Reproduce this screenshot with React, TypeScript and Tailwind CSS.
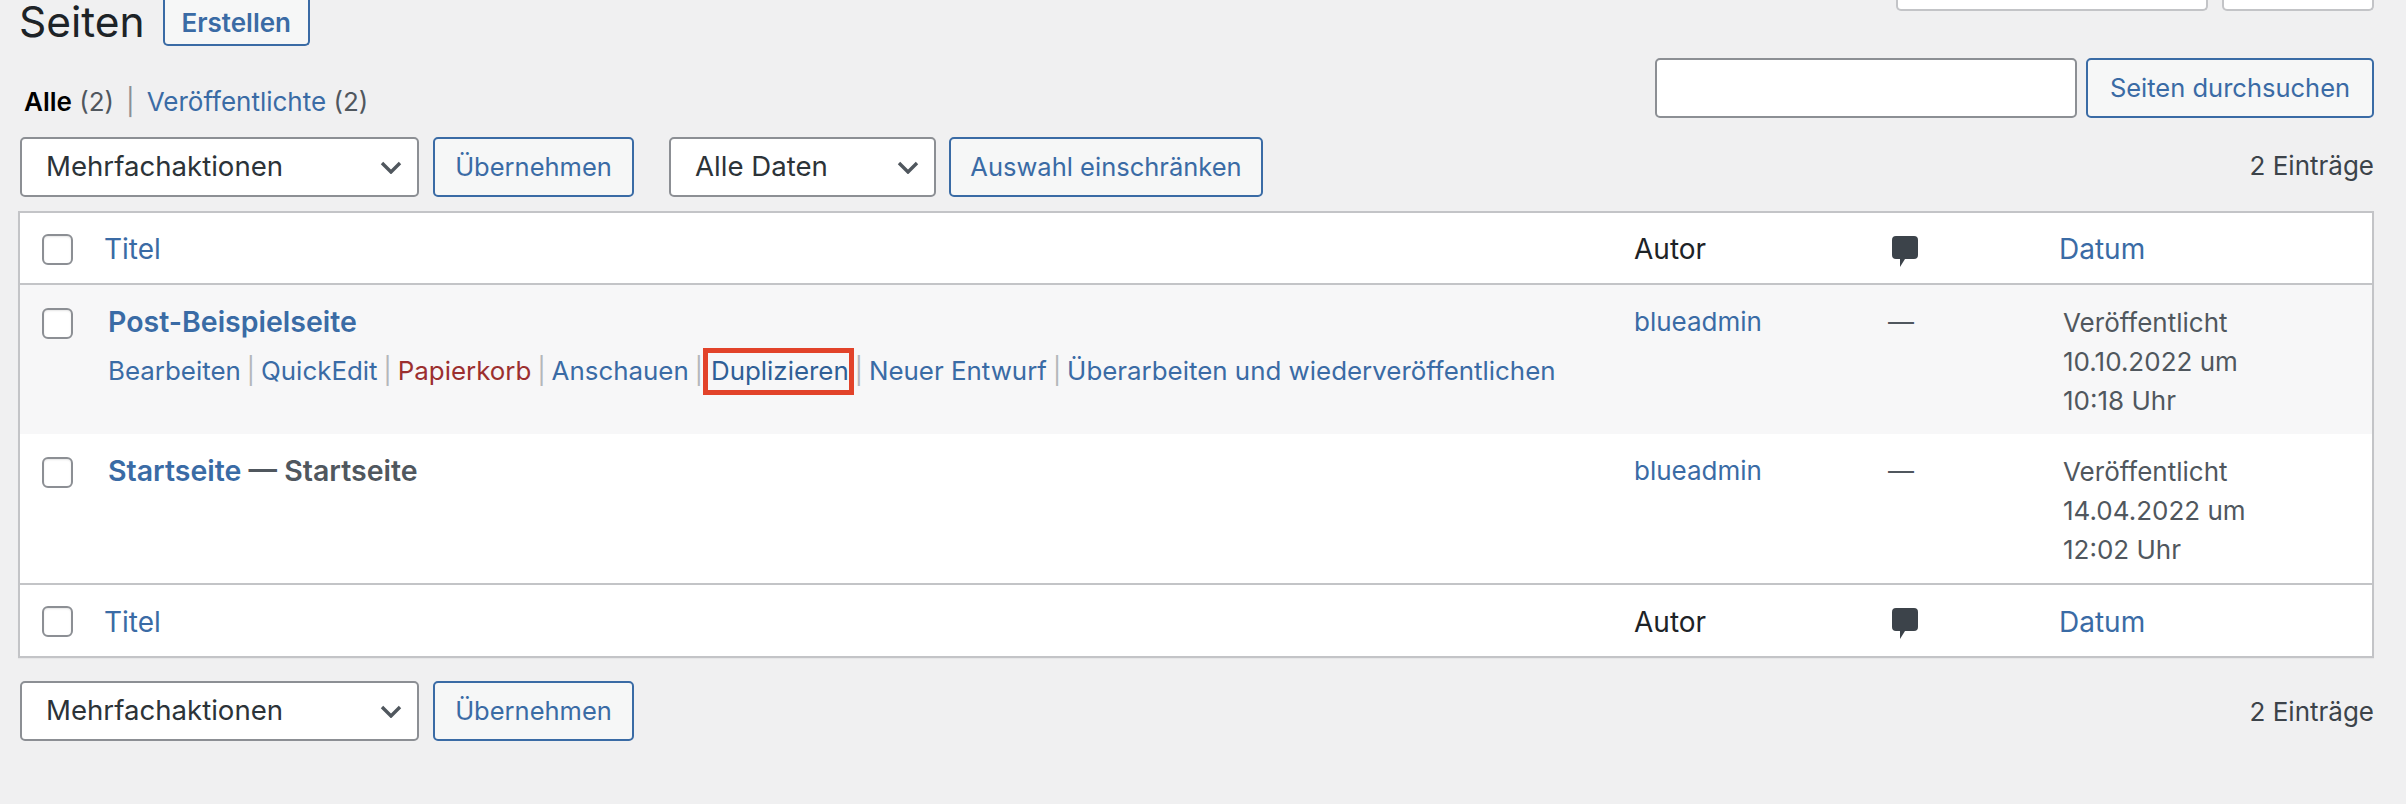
import React from 'react';

const FONT = "font-['Inter','Noto_Sans',sans-serif]";

const Chevron = () => (
  <svg width="22" height="13" viewBox="0 0 22 13" className="shrink-0">
    <path d="M2 2l9 9 9-9" fill="none" stroke="#50575e" strokeWidth="3.4" />
  </svg>
);

const CommentIcon = () => (
  <svg width="26" height="31" viewBox="0 0 26 31" className="mt-[4px] block">
    <path d="M4 0h18a4 4 0 0 1 4 4v15a4 4 0 0 1-4 4h-9l-5 8v-8H4a4 4 0 0 1-4-4V4a4 4 0 0 1 4-4z" fill="#3c434a" />
  </svg>
);

const Checkbox = () => (
  <div className="h-[31px] w-[31px] shrink-0 rounded-[6px] border-2 border-[#8c8f94] bg-white shadow-[inset_0_1px_2px_rgba(0,0,0,0.1)]" />
);

const Button: React.FC<{ label: string; className?: string }> = ({ label, className = '' }) => (
  <button className={`flex h-[60px] items-center justify-center rounded-[5px] border-2 border-[#3a6ba5] bg-[#f6f7f7] text-[25.5px] text-[#3a6ba5] ${className}`}>
    {label}
  </button>
);

const SelectBox: React.FC<{ label: string; className?: string }> = ({ label, className = '' }) => (
  <div className={`flex h-[60px] items-center justify-between rounded-[5px] border-2 border-[#8c8f94] bg-white pl-[24px] pr-[15px] text-[27.6px] text-[#2c3338] ${className}`}>
    <span>{label}</span>
    <Chevron />
  </div>
);

const Sep = () => <span className="mx-[5.8px] text-[#b4b7ba]">|</span>;

const HeaderRow: React.FC<{ className?: string }> = ({ className = '' }) => (
  <div className={`flex items-center pt-[2px] ${className}`}>
    <div className="w-[84px] pl-[22px]">
      <Checkbox />
    </div>
    <div className="w-[1530px] text-[#3a6ba5]">Titel</div>
    <div className="w-[258px] text-[#1d2327]">Autor</div>
    <div className="w-[167px]">
      <CommentIcon />
    </div>
    <div className="text-[#3a6ba5]">Datum</div>
  </div>
);

const PageRow: React.FC<{
  title: string;
  state?: string;
  date: string;
  time: string;
  hover?: boolean;
}> = ({ title, state, date, time, hover }) => (
  <div className={`flex h-[149px] pt-[23px] ${hover ? 'bg-[#f7f7f8]' : 'bg-white'}`}>
    <div className="w-[84px] pl-[22px]">
      <Checkbox />
    </div>
    <div className="w-[1530px] pl-[4px]">
      <div className="h-[28px] text-[28.5px] font-semibold leading-[28px] text-[#3a6ba5]">
        {title}
        {state && <span className="text-[#50575e]"> — {state}</span>}
      </div>
      {hover && (
        <div className="mt-[21px] flex h-[28px] items-center whitespace-nowrap text-[25.9px] text-[#3a6ba5]">
          <span>Bearbeiten</span>
          <Sep />
          <span>QuickEdit</span>
          <Sep />
          <span className="text-[#9c2f2f]">Papierkorb</span>
          <Sep />
          <span>Anschauen</span>
          <Sep />
          <span className="-ml-[6px] -mr-[5px] flex h-[47px] items-center border-[5px] border-[#e2432a] pl-[3px] text-[#2f5f96]">Duplizieren</span>
          <Sep />
          <span>Neuer Entwurf</span>
          <Sep />
          <span>Überarbeiten und wiederveröffentlichen</span>
        </div>
      )}
    </div>
    <div className="h-[28px] w-[254px] text-[26px] leading-[28px] text-[#3a6ba5]">blueadmin</div>
    <div className="h-[28px] w-[175px] text-[26px] leading-[28px] text-[#50575e]">—</div>
    <div className="-mt-[5px] text-[26px] leading-[39px] text-[#50575e]">
      <div>Veröffentlicht</div>
      <div>{date} um</div>
      <div>{time} Uhr</div>
    </div>
  </div>
);

export default function App() {
  return (
    <div className={`h-[804px] overflow-hidden bg-[#f0f0f1] pl-[18px] pr-[32px] ${FONT}`}>
      <div className="flex items-start justify-between">
        <div className="flex items-start pl-px">
          <h1 className="text-[42.5px] font-normal leading-[44px] text-[#1d2327]">Seiten</h1>
          <div className="ml-[18px] flex h-[46px] w-[147px] items-center justify-center rounded-b-[5px] border-2 border-t-0 border-[#3a6ba5] bg-[#f6f7f7] text-[26px] font-semibold text-[#3a6ba5]">
            Erstellen
          </div>
        </div>
        <div className="flex gap-[14px]">
          <div className="h-[11px] w-[312px] rounded-b-[5px] border-2 border-t-0 border-[#c3c4c7] bg-white" />
          <div className="h-[11px] w-[152px] rounded-b-[5px] border-2 border-t-0 border-[#c3c4c7] bg-white" />
        </div>
      </div>

      <div className="mt-[12px] flex items-end justify-between">
        <div className="pl-[6px] text-[26px] leading-[32px] text-[#50575e]">
          <span className="font-semibold text-black">Alle</span> (2)
          <span className="mx-[12px] text-[#8c8f94]">|</span>
          <span className="text-[#3a6ba5]">Veröffentlichte</span> (2)
        </div>
        <div className="flex gap-[9px]">
          <div className="h-[60px] w-[422px] rounded-[5px] border-2 border-[#8c8f94] bg-white" />
          <Button label="Seiten durchsuchen" className="w-[288px]" />
        </div>
      </div>

      <div className="mt-[19px] flex items-center">
        <SelectBox label="Mehrfachaktionen" className="ml-[2px] w-[399px]" />
        <Button label="Übernehmen" className="ml-[14px] w-[201px]" />
        <SelectBox label="Alle Daten" className="ml-[35px] w-[267px]" />
        <Button label="Auswahl einschränken" className="ml-[13px] w-[314px]" />
        <div className="mb-[3px] ml-auto text-[26px] text-[#3c434a]">2 Einträge</div>
      </div>

      <div className="mt-[14px] border-2 border-[#c3c4c7] bg-white text-[28px] shadow-[0_1px_1px_rgba(0,0,0,0.04)]">
        <HeaderRow className="h-[72px] border-b-2 border-[#c3c4c7]" />
        <PageRow title="Post-Beispielseite" date="10.10.2022" time="10:18" hover />
        <PageRow title="Startseite" state="Startseite" date="14.04.2022" time="12:02" />
        <HeaderRow className="h-[73px] border-t-2 border-[#c3c4c7]" />
      </div>

      <div className="mt-[23px] flex items-center">
        <SelectBox label="Mehrfachaktionen" className="ml-[2px] w-[399px]" />
        <Button label="Übernehmen" className="ml-[14px] w-[201px]" />
        <div className="ml-auto text-[26px] text-[#3c434a]">2 Einträge</div>
      </div>
    </div>
  );
}
